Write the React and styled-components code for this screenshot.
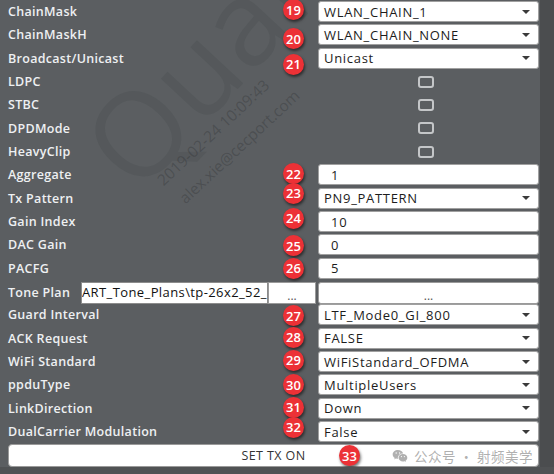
import React from "react";
import styled, { createGlobalStyle } from "styled-components";
import { RiWechatFill } from "react-icons/ri";

const GlobalStyle = createGlobalStyle`
  html, body {
    margin: 0;
    padding: 0;
    background: #4b4d4f;
  }
  body {
    font-family: "Open Sans", "Noto Sans", sans-serif;
  }
`;

const rows = [
  { label: "ChainMask", type: "select", value: "WLAN_CHAIN_1", badge: 19, dy: -2 },
  { label: "ChainMaskH", type: "select", value: "WLAN_CHAIN_NONE", badge: 20, dy: 4 },
  { label: "Broadcast/Unicast", type: "select", value: "Unicast", badge: 21, dy: 6 },
  { label: "LDPC", type: "check" },
  { label: "STBC", type: "check" },
  { label: "DPDMode", type: "check" },
  { label: "HeavyClip", type: "check" },
  { label: "Aggregate", type: "input", value: "1", badge: 22, dy: -1 },
  { label: "Tx Pattern", type: "select", value: "PN9_PATTERN", badge: 23, dy: -5 },
  { label: "Gain Index", type: "input", value: "10", badge: 24, dy: -3 },
  { label: "DAC Gain", type: "input", value: "0", badge: 25, dy: 1 },
  { label: "PACFG", type: "input", value: "5", badge: 26, dy: 0 },
  { label: "Tone Plan", type: "tone", value: "ART_Tone_Plans\\tp-26x2_52_" },
  { label: "Guard Interval", type: "select", value: "LTF_Mode0_GI_800", badge: 27, dy: 1 },
  { label: "ACK Request", type: "select", value: "FALSE", badge: 28, dy: -1 },
  { label: "WiFi Standard", type: "select", value: "WiFiStandard_OFDMA", badge: 29, dy: -1 },
  { label: "ppduType", type: "select", value: "MultipleUsers", badge: 30, dy: 0 },
  { label: "LinkDirection", type: "select", value: "Down", badge: 31, dy: -1 },
  { label: "DualCarrier Modulation", type: "select", value: "False", badge: 32, dy: -4 },
];

const App = () => {
  const renderControl = (row) => {
    if (row.type === "select") {
      return (
        <SelectBox>
          <ValueText>{row.value}</ValueText>
          <Caret />
        </SelectBox>
      );
    }
    if (row.type === "input") {
      return (
        <InputBox>
          <ValueText>{row.value}</ValueText>
        </InputBox>
      );
    }
    if (row.type === "check") {
      return (
        <CheckCell>
          <CheckBox />
        </CheckCell>
      );
    }
    return (
      <BrowseButton wide>
        <Dots>...</Dots>
      </BrowseButton>
    );
  };

  return (
    <>
      <GlobalStyle />
      <Page>
        <Panel>
          <Watermark>
            <BigMark>Qual</BigMark>
            <StampLine top={174} left={152}>2019-02-24 10:09:43</StampLine>
            <StampLine top={192} left={174}>alex.xie@cecport.com</StampLine>
          </Watermark>
          <Rows>
            {rows.map((row) => (
              <Row key={row.label}>
                {row.type === "tone" ? (
                  <ToneCell>
                    <Label>{row.label}</Label>
                    <PathInput>{row.value}</PathInput>
                    <BrowseButton>
                      <Dots>...</Dots>
                    </BrowseButton>
                  </ToneCell>
                ) : (
                  <Label>{row.label}</Label>
                )}
                {renderControl(row)}
                {row.badge && <Badge style={{ top: 1 + row.dy }}>{row.badge}</Badge>}
              </Row>
            ))}
            <ButtonRow>
              <SetButton>SET TX ON</SetButton>
              <Badge style={{ left: 339, top: 2 }}>33</Badge>
              <Credit>
                <RiWechatFill size={16} />
                <span>公众号 · 射频美学</span>
              </Credit>
            </ButtonRow>
          </Rows>
        </Panel>
        <SideStrip />
      </Page>
      <BottomStrip />
    </>
  );
};

export default App;

const Page = styled.div`
  display: flex;
  width: 554px;
  height: 467px;
`;

const Panel = styled.div`
  position: relative;
  width: 540px;
  background: #5b5e61;
  overflow: hidden;
`;

const SideStrip = styled.div`
  flex: 1;
  background: #4b4d4f;
`;

const BottomStrip = styled.div`
  height: 7px;
  width: 554px;
  background: #505254;
`;

const Watermark = styled.div`
  position: absolute;
  inset: 0;
  pointer-events: none;
  z-index: 0;
`;

const BigMark = styled.div`
  position: absolute;
  left: 62px;
  top: 125px;
  transform: rotate(-47deg);
  transform-origin: left top;
  font-family: "Open Sans", sans-serif;
  font-size: 118px;
  line-height: 1;
  color: rgba(40, 42, 44, 0.11);
`;

const StampLine = styled.div`
  position: absolute;
  left: ${(p) => p.left}px;
  top: ${(p) => p.top}px;
  transform: rotate(-43deg);
  transform-origin: left top;
  font-family: "Open Sans", sans-serif;
  font-size: 15.5px;
  white-space: nowrap;
  color: rgba(40, 42, 44, 0.3);
`;

const Rows = styled.div`
  position: relative;
  z-index: 1;
  display: flex;
  flex-direction: column;
`;

const Row = styled.div`
  position: relative;
  display: grid;
  grid-template-columns: 310px 221px;
  align-items: center;
  height: 23.33px;
  padding-left: 8px;
`;

const Label = styled.div`
  font-size: 12.5px;
  font-weight: 600;
  letter-spacing: 0.3px;
  color: #eef0f2;
  white-space: nowrap;
`;

const ToneCell = styled.div`
  display: grid;
  grid-template-columns: 73px 187px 48px;
  align-items: center;

  ${Label} {
    padding-top: 2px;
  }
`;

const PathInput = styled.div`
  height: 22px;
  box-sizing: border-box;
  margin-top: 2px;
  background: #fff;
  border: 1px solid #8c8c8c;
  font-size: 13px;
  letter-spacing: 0.4px;
  line-height: 19px;
  color: #111;
  white-space: nowrap;
  overflow: hidden;
`;

const BrowseButton = styled.div`
  height: 22px;
  box-sizing: border-box;
  margin-top: 2px;
  background: #fff;
  border: 1px solid #9a9a9a;
  border-radius: ${(p) => (p.wide ? "3px" : "0")};
  display: flex;
  justify-content: center;
  align-items: flex-end;
`;

const Dots = styled.span`
  font-size: 12px;
  line-height: 14px;
  color: #555;
`;

const SelectBox = styled.div`
  height: 21px;
  box-sizing: border-box;
  background: #fff;
  border: 1px solid #a0a0a0;
  border-radius: 3px;
  display: flex;
  align-items: center;
  justify-content: space-between;
  padding: 0 8px 0 5px;
`;

const InputBox = styled(SelectBox)`
  padding-left: 12px;
`;

const ValueText = styled.span`
  font-size: 13px;
  letter-spacing: 0.7px;
  color: #1c1c1c;
  white-space: nowrap;
`;

const Caret = styled.span`
  width: 0;
  height: 0;
  border-left: 4.5px solid transparent;
  border-right: 4.5px solid transparent;
  border-top: 4.5px solid #3a3a3a;
`;

const CheckCell = styled.div`
  display: flex;
  justify-content: center;
  padding-right: 6px;
`;

const CheckBox = styled.span`
  width: 16px;
  height: 12px;
  box-sizing: border-box;
  border: 2px solid #c4c6c8;
  border-radius: 3px;
`;

const Badge = styled.div`
  position: absolute;
  left: 283px;
  width: 21px;
  height: 21px;
  border-radius: 50%;
  background: #ec3136;
  color: #fff;
  font-size: 13px;
  font-weight: 600;
  display: flex;
  align-items: center;
  justify-content: center;
  box-shadow: 1px 2px 3px rgba(0, 0, 0, 0.55);
`;

const ButtonRow = styled.div`
  position: relative;
  padding: 1px 0 0 8px;
`;

const SetButton = styled.div`
  width: 531px;
  height: 23px;
  box-sizing: border-box;
  background: #fff;
  border: 1px solid #9a9a9a;
  border-radius: 4px;
  display: flex;
  align-items: center;
  justify-content: center;
  font-size: 12.5px;
  letter-spacing: 0.4px;
  color: #333;
`;

const Credit = styled.div`
  position: absolute;
  left: 392px;
  top: 3px;
  display: flex;
  align-items: center;
  gap: 6px;
  white-space: nowrap;
  color: rgba(150, 150, 150, 0.75);
  font-family: "Noto Sans CJK SC", sans-serif;
  font-size: 13.5px;
  letter-spacing: 0.5px;
`;
